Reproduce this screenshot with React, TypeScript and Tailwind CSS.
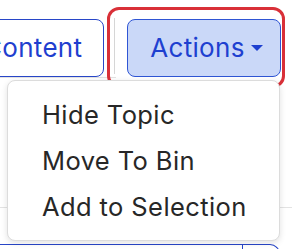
import React from "react";

const menuItems = ["Hide Topic", "Move To Bin", "Add to Selection"];

function Caret() {
  return (
    <svg width="12" height="6" viewBox="0 0 12 6" className="shrink-0">
      <path d="M0 0 L12 0 L6 6 Z" fill="#1e40d0" />
    </svg>
  );
}

export default function App() {
  return (
    <div
      className="relative w-[292px] h-[249px] overflow-hidden bg-white"
      style={{ fontFamily: "Inter, 'Noto Sans', sans-serif" }}
    >
      {/* toolbar */}
      <div className="pt-[18px] border-b border-[#e3e3e3] w-[116px]">
        <div className="flex items-center h-[59px] w-[292px]">
          <button className="ml-[-40px] h-[58px] pl-[22px] pr-[21px] rounded-[8px] border border-[#2846c8] bg-white text-[26px] text-[#1f3fcf] leading-none tracking-[0.3px]">
            Content
          </button>
          <div className="ml-[10px] w-px h-[56px] bg-[#d6d6d6] self-start" />
          <button className="ml-[12px] h-[58px] w-[154px] pl-[22px] pr-[20px] rounded-[8px] border border-[#2f55d4] bg-[#cad8f8] text-[26px] text-[#1e40d0] leading-none tracking-[0.3px] flex items-center gap-[6px]">
            <span>Actions</span>
            <Caret />
          </button>
        </div>
      </div>

      {/* content behind the menu */}
      <div className="mt-[129px] border-t border-[#e3e3e3]" />
      <div className="mt-[36px] w-[280px] h-[20px] rounded-tr-[10px] border-t border-r border-[#2846c8] flex">
        <div className="ml-[242px] w-px h-full bg-[#2846c8]" />
      </div>

      {/* highlight */}
      <div className="absolute left-[107px] top-[7px] w-[178px] h-[81px] rounded-[12px] border-[3px] border-[#d93038] pointer-events-none" />

      {/* dropdown */}
      <div className="absolute left-[7px] top-[80px] w-[273px] h-[161px] rounded-[8px] border border-[#dcdcdc] bg-white shadow-[0_2px_6px_rgba(0,0,0,0.12)] pt-[11px]">
        {menuItems.map((item) => (
          <div
            key={item}
            className="h-[46px] leading-[46px] pl-[34px] text-[25.5px] tracking-[0.4px] text-[#272727] whitespace-nowrap"
          >
            {item}
          </div>
        ))}
      </div>
    </div>
  );
}
